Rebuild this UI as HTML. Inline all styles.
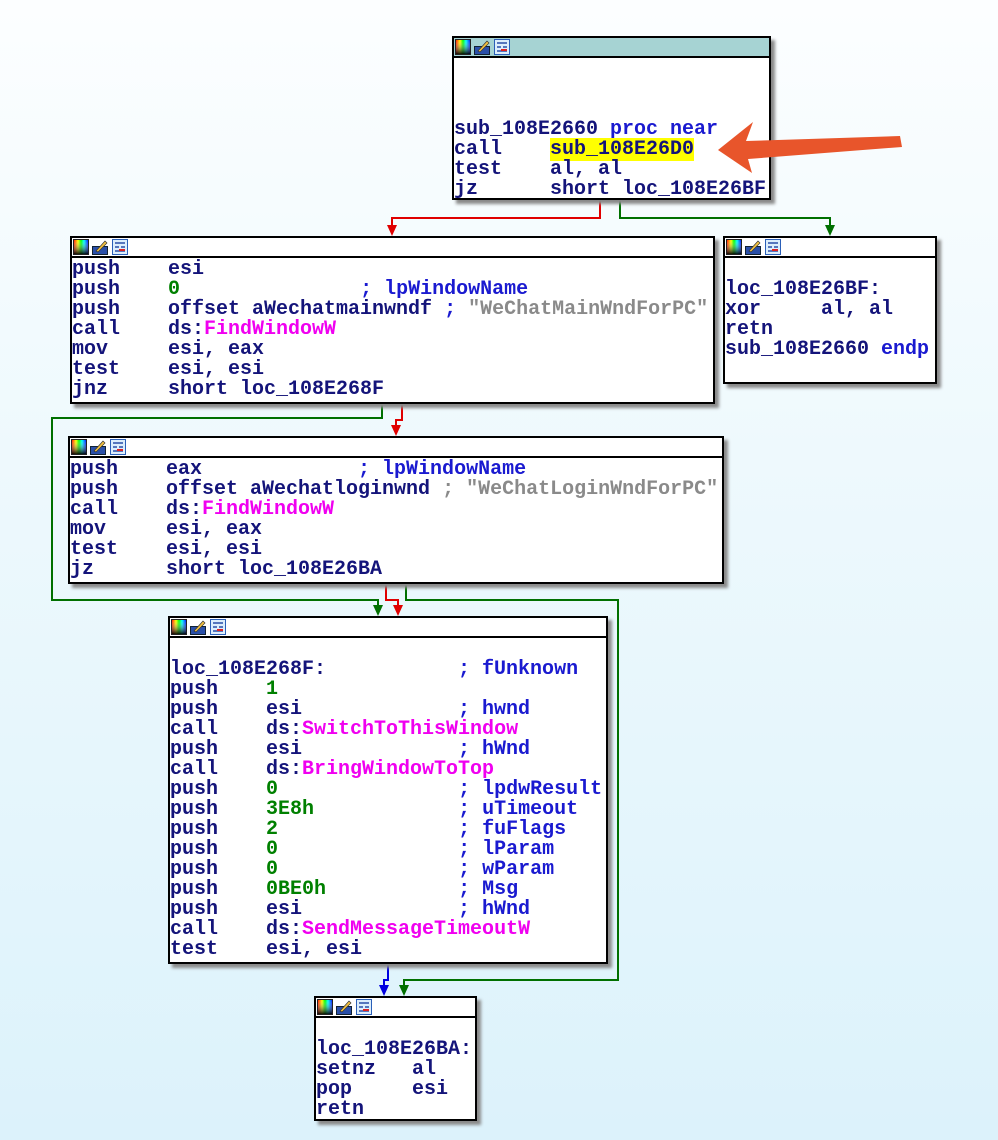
<!DOCTYPE html>
<html><head><meta charset="utf-8"><style>
html,body{margin:0;padding:0}
body{width:998px;height:1140px;position:relative;overflow:hidden;background:linear-gradient(#fcfeff 0%,#eef9fd 40%,#dcf2fb 100%);font-family:"Liberation Mono",monospace;}
.b{position:absolute;background:#fff;border:2px solid #000;box-shadow:4px 4px 3px #8a8a8a;box-sizing:border-box}
.h{height:18px;border-bottom:2px solid #000;background:#fff;position:relative}
.h.sel{background:#a6d3d3}
.ic{position:absolute;top:1px;left:1px;width:56px;height:16px}
pre{margin:0;padding-top:2px;font-family:"Liberation Mono",monospace;font-size:20px;line-height:20px;font-weight:700;color:#14147a;white-space:pre}
.c{color:#1a1ad0}.g{color:#008000}.m{color:#f000f0}.s{color:#8a8a8a}.y{background:#ffff00}
svg.e{position:absolute;left:0;top:0}
</style></head><body>
<svg width="0" height="0" style="position:absolute"><defs>
<linearGradient id="rb" x1="0" x2="1" y1="0" y2="0"><stop offset="0" stop-color="#f00"/><stop offset=".3" stop-color="#ff0"/><stop offset=".5" stop-color="#0f0"/><stop offset=".7" stop-color="#0ff"/><stop offset="1" stop-color="#00f"/></linearGradient>
<linearGradient id="dk" x1="0" x2="0" y1="0" y2="1"><stop offset="0" stop-color="#fff" stop-opacity="0"/><stop offset="1" stop-color="#000" stop-opacity=".9"/></linearGradient>
<g id="icons">
<rect x="0.5" y="0.5" width="15" height="15" fill="url(#rb)" stroke="#222"/><rect x="1" y="1" width="14" height="14" fill="url(#dk)"/>
<rect x="19.5" y="7.5" width="15" height="8" fill="#2a4fa8" stroke="#123"/><path d="M23 12 L32 2 L34 4 L25 13 Z" fill="#f2c040" stroke="#333" stroke-width=".7"/>
<rect x="39.5" y="0.5" width="15" height="15" fill="#dceefc" stroke="#2a5fb8"/><path d="M42 4h10M42 8h4M48 8h4M42 12h10" stroke="#2a4fa8" stroke-width="1.5"/><path d="M46 11h6" stroke="#d22" stroke-width="2"/>
</g></defs></svg>
<svg class="e" width="998" height="1140">
<g fill="none" stroke-width="2">
<polyline points="600,200 600,218 392,218 392,228" stroke="#e00000"/>
<polyline points="620,200 620,218 830,218 830,228" stroke="#007000"/>
<polyline points="382,404 382,418 52,418 52,600 378,600 378,608" stroke="#007000"/>
<polyline points="402,404 402,420 396,420 396,428" stroke="#e00000"/>
<polyline points="386,584 386,600 398,600 398,608" stroke="#e00000"/>
<polyline points="406,584 406,600 618,600 618,980 404,980 404,988" stroke="#007000"/>
<polyline points="388,964 388,980 384,980 384,988" stroke="#0000e0"/>
</g>
<g>
<polygon points="387,225 397,225 392,236" fill="#e00000"/>
<polygon points="825,225 835,225 830,236" fill="#007000"/>
<polygon points="391,425 401,425 396,436" fill="#e00000"/>
<polygon points="373,605 383,605 378,616" fill="#007000"/>
<polygon points="393,605 403,605 398,616" fill="#e00000"/>
<polygon points="399,985 409,985 404,996" fill="#007000"/>
<polygon points="379,985 389,985 384,996" fill="#0000e0"/>
</g>
</svg>

<div class="b" style="left:452px;top:36px;width:319px;height:164px"><div class="h sel"><svg class="ic" viewBox="0 0 56 16"><use href="#icons"/></svg></div>
<pre>



sub_108E2660 <span class="c">proc near</span>
call    <span class="y">sub_108E26D0</span>
test    al, al
jz      short loc_108E26BF</pre></div>

<div class="b" style="left:70px;top:236px;width:645px;height:168px"><div class="h"><svg class="ic" viewBox="0 0 56 16"><use href="#icons"/></svg></div>
<pre>
push    esi
push    <span class="g">0</span>               <span class="c">; lpWindowName</span>
push    offset aWechatmainwndf <span class="c">;</span> <span class="s">"WeChatMainWndForPC"</span>
call    ds:<span class="m">FindWindowW</span>
mov     esi, eax
test    esi, esi
jnz     short loc_108E268F</pre></div>

<div class="b" style="left:723px;top:236px;width:214px;height:148px"><div class="h"><svg class="ic" viewBox="0 0 56 16"><use href="#icons"/></svg></div>
<pre>

loc_108E26BF:
xor     al, al
retn
sub_108E2660 <span class="c">endp</span></pre></div>

<div class="b" style="left:68px;top:436px;width:656px;height:148px"><div class="h"><svg class="ic" viewBox="0 0 56 16"><use href="#icons"/></svg></div>
<pre>
push    eax             <span class="c">; lpWindowName</span>
push    offset aWechatloginwnd <span class="s">; "WeChatLoginWndForPC"</span>
call    ds:<span class="m">FindWindowW</span>
mov     esi, eax
test    esi, esi
jz      short loc_108E26BA</pre></div>

<div class="b" style="left:168px;top:616px;width:440px;height:348px"><div class="h"><svg class="ic" viewBox="0 0 56 16"><use href="#icons"/></svg></div>
<pre>

loc_108E268F:           <span class="c">; fUnknown</span>
push    <span class="g">1</span>
push    esi             <span class="c">; hwnd</span>
call    ds:<span class="m">SwitchToThisWindow</span>
push    esi             <span class="c">; hWnd</span>
call    ds:<span class="m">BringWindowToTop</span>
push    <span class="g">0</span>               <span class="c">; lpdwResult</span>
push    <span class="g">3E8h</span>            <span class="c">; uTimeout</span>
push    <span class="g">2</span>               <span class="c">; fuFlags</span>
push    <span class="g">0</span>               <span class="c">; lParam</span>
push    <span class="g">0</span>               <span class="c">; wParam</span>
push    <span class="g">0BE0h</span>           <span class="c">; Msg</span>
push    esi             <span class="c">; hWnd</span>
call    ds:<span class="m">SendMessageTimeoutW</span>
test    esi, esi</pre></div>

<div class="b" style="left:314px;top:996px;width:163px;height:125px"><div class="h"><svg class="ic" viewBox="0 0 56 16"><use href="#icons"/></svg></div>
<pre>

loc_108E26BA:
setnz   al
pop     esi
retn</pre></div>

<svg class="e" width="998" height="1140" style="z-index:5">
<polygon points="718,150 753,122 746,141 900,136 902,147 748,159 752,173" fill="#e8552b"/>
</svg>
</body></html>
